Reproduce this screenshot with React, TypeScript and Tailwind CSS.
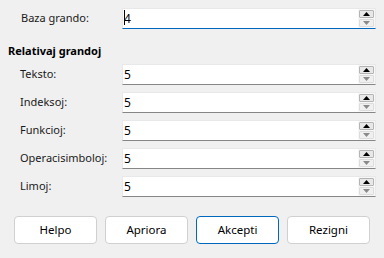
import React from 'react';

interface Field {
  label: string;
  value: string;
}

function Spin({ value, focused }: { value: string; focused?: boolean }) {
  return (
    <div
      className={
        'flex h-[21px] w-[254px] items-center bg-white border border-[#e8e8e8] border-b ' +
        (focused ? 'border-b-[#0067c0]' : 'border-b-[#868686]')
      }
    >
      <div className="relative flex-1 pl-[1px] text-[12px] text-black leading-none">
        {focused && <span className="absolute left-[1px] top-[-3px] h-[15px] w-[1px] bg-black" />}
        {value}
      </div>
      <div className="flex h-full flex-col justify-center gap-[1px] bg-[#f7f7f7] pl-[1px] pr-[1px]">
        <div className="flex h-[8px] w-[15px] items-center justify-center rounded-[1px] border border-[#b4b4b4] bg-[#e8e8e8]">
          <svg width="7" height="4" viewBox="0 0 7 4">
            <path d="M0 4 L3.5 0 L7 4 Z" fill="#000" />
          </svg>
        </div>
        <div className="flex h-[8px] w-[15px] items-center justify-center rounded-[1px] border border-[#dcdcdc] bg-[#f0f0f0]">
          <svg width="7" height="4" viewBox="0 0 7 4">
            <path d="M0 0 L7 0 L3.5 4 Z" fill="#8a8a8a" />
          </svg>
        </div>
      </div>
    </div>
  );
}

export default function App() {
  const fields: Field[] = [
    { label: 'Teksto:', value: '5' },
    { label: 'Indeksoj:', value: '5' },
    { label: 'Funkcioj:', value: '5' },
    { label: 'Operacisimboloj:', value: '5' },
    { label: 'Limoj:', value: '5' },
  ];
  const buttons = ['Helpo', 'Apriora', 'Akcepti', 'Rezigni'];

  return (
    <div
      className="h-[258px] w-[384px] overflow-hidden bg-[#f0f0f0] text-[11px] text-[#1a1a1a]"
      style={{ fontFamily: '"Noto Sans", "Segoe UI", sans-serif' }}
    >
      <div className="flex items-center pt-[8px]">
        <div className="w-[122px] pl-[21px]">Baza grando:</div>
        <Spin value="4" focused />
      </div>

      <div className="mt-[14px] pl-[8px] font-bold leading-[16px] text-black">Relativaj grandoj</div>

      <div className="mt-[5px] flex flex-col gap-[7px]">
        {fields.map((f) => (
          <div key={f.label} className="flex items-center">
            <div className="w-[122px] pl-[20px]">{f.label}</div>
            <Spin value={f.value} />
          </div>
        ))}
      </div>

      <div className="mt-[19px] flex gap-[8px] pl-[14px]">
        {buttons.map((b) => (
          <button
            key={b}
            className={
              'h-[28px] w-[83px] rounded-[4px] bg-white text-[11.5px] text-black border ' +
              (b === 'Akcepti' ? 'border-[#0067c0]' : 'border-[#d0d0d0]')
            }
          >
            {b}
          </button>
        ))}
      </div>
    </div>
  );
}
